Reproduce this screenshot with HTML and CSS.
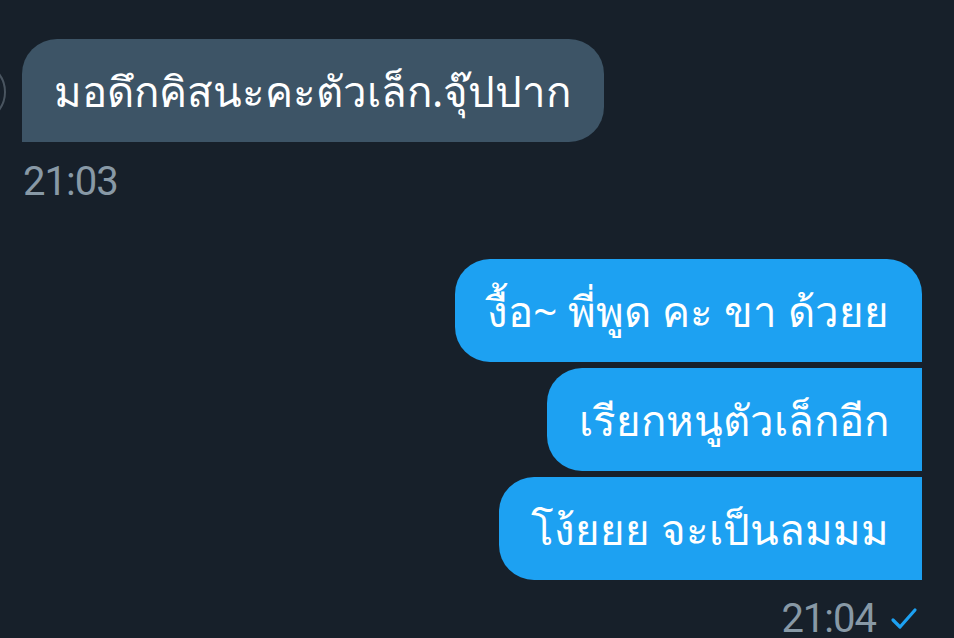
FILE: index.html
```html
<!DOCTYPE html>
<html lang="th">
<head>
<meta charset="utf-8">
<link rel="stylesheet" href="styles.css">
</head>
<body>
<div class="chat">
  <div class="in-row">
    <div class="avatar"></div>
    <div class="bubble in">มอดึกคิสนะคะตัวเล็ก.จุ๊ปปาก</div>
  </div>
  <div class="time in-time">21:03</div>

  <div class="out-group">
    <div class="bubble out first">งื้อ~ พี่พูด คะ ขา ด้วยย</div>
    <div class="bubble out mid">เรียกหนูตัวเล็กอีก</div>
    <div class="bubble out last">โง้ยยย จะเป็นลมมม</div>
  </div>
  <div class="time out-time">21:04 <svg class="check" viewBox="0 0 28 28" width="28" height="28"><path d="M3 15 L10 22 L25 5" fill="none" stroke="#1da1f2" stroke-width="3.2" stroke-linecap="round" stroke-linejoin="round"/></svg></div>
</div>
</body>
</html>
```
FILE: styles.css
```css
html, body {
  margin: 0;
  padding: 0;
  background: #17202a;
  width: 954px;
  height: 638px;
  overflow: hidden;
  font-family: "Noto Sans", Roboto, "Liberation Sans", sans-serif;
}
.chat {
  display: flex;
  flex-direction: column;
  padding-top: 39px;
}
.in-row {
  display: flex;
  align-items: center;
  position: relative;
}
.avatar {
  position: absolute;
  left: -56px;
  top: 22px;
  width: 62px;
  height: 62px;
  border-radius: 50%;
  border: 2px solid #4a5560;
  box-sizing: border-box;
}
.bubble {
  color: #fff;
  font-size: 42px;
  line-height: 103px;
  padding: 0 33px 0 32px;
  box-sizing: border-box;
  height: 103px;
  white-space: nowrap;
}
.in {
  margin-left: 22px;
  background: #3d5466;
  border-radius: 35px 35px 35px 0;
}
.time {
  color: #8899a6;
  font-family: Roboto, "Liberation Sans", sans-serif;
  font-size: 40px;
  line-height: 44px;
  letter-spacing: -1px;
}
.in-time {
  margin: 18px 0 0 23px;
}
.out-group {
  display: flex;
  flex-direction: column;
  align-items: flex-end;
  gap: 6px;
  margin-top: 55px;
  padding-right: 32px;
}
.out {
  background: #1da1f2;
}
.first { border-radius: 35px 35px 0 35px; }
.mid { border-radius: 35px 0 0 35px; }
.last { border-radius: 35px 0 0 35px; }
.out-time {
  display: flex;
  align-items: center;
  justify-content: flex-end;
  gap: 14px;
  padding-right: 36px;
  margin-top: 17px;
}
.check { display: block; }
```
